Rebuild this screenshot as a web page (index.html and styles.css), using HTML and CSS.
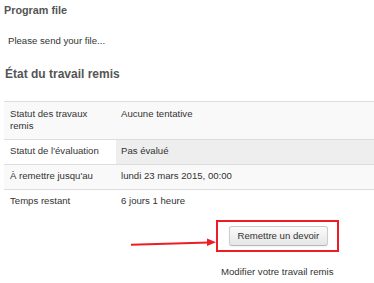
FILE: index.html
```html
<!DOCTYPE html>
<html lang="fr">
  <head>
    <meta charset="UTF-8">
    <meta name="viewport" content="width=device-width, initial-scale=1.0">
    <title>Travail remis</title>
    <link rel="stylesheet" href="styles.css">
  </head>
  <body>
    <h3 class="file-title">Program file</h3>
    <p class="intro">Please send your file...</p>

    <h3 class="status-title">État du travail remis</h3>
    <table class="status-table">
      <tr class="row-shaded">
        <td class="label">Statut des travaux remis</td>
        <td class="value">Aucune tentative</td>
      </tr>
      <tr>
        <td class="label">Statut de l'évaluation</td>
        <td class="value value-grey">Pas évalué</td>
      </tr>
      <tr class="row-shaded">
        <td class="label">À remettre jusqu'au</td>
        <td class="value">lundi 23 mars 2015, 00:00</td>
      </tr>
      <tr>
        <td class="label">Temps restant</td>
        <td class="value">6 jours 1 heure</td>
      </tr>
    </table>

    <div class="submission">
      <svg class="arrow" width="85" height="32" viewBox="0 0 85 32">
        <line x1="0" y1="24.7" x2="78" y2="22.4" stroke="#ee1c24" stroke-width="2"/>
        <polygon points="76,18.6 85,22.2 76,26" fill="#ee1c24"/>
      </svg>
      <div class="submit-col">
        <div class="highlight">
          <button class="btn">Remettre un devoir</button>
        </div>
        <div class="edit-note">Modifier votre travail remis</div>
      </div>
    </div>
  </body>
</html>
```

FILE: styles.css
```css
body {
    font-family: "Liberation Sans", Arial, sans-serif;
    font-size: 9.6px;
    line-height: 12.5px;
    color: #333;
    background: #fff;
    margin: 0;
    padding: 0 0 0 4px;
}
h3 {
    font-weight: bold;
    color: #555;
    margin: 0;
}
.file-title {
    font-size: 10.8px;
    line-height: 13px;
    margin-top: 4px;
}
.intro {
    margin: 17.5px 0 0 4px;
}
.status-title {
    font-size: 12px;
    line-height: 15px;
    margin: 19.5px 0 0 1px;
}
.status-table {
    border-collapse: collapse;
    table-layout: fixed;
    width: 370px;
    margin-top: 19.5px;
}
.status-table td {
    border-top: 1px solid #ddd;
    padding: 5.5px 6px 6px 6px;
    vertical-align: top;
}
.status-table .label {
    width: 98px;
    padding-right: 8px;
}
.status-table .value {
    padding-left: 5px;
}
.row-shaded td {
    background: #f9f9f9;
}
.value-grey {
    background: #eee;
}
.submission {
    display: flex;
    align-items: flex-start;
    padding-left: 127px;
    margin-top: 6px;
}
.arrow {
    display: block;
}
.submit-col {
    display: flex;
    flex-direction: column;
    align-items: center;
}
.highlight {
    border: 2px solid #ee1c24;
    padding: 4.5px 9px 3.5px 11px;
}
.btn {
    display: block;
    font-family: "Liberation Sans", Arial, sans-serif;
    font-size: 9.6px;
    line-height: 12px;
    color: #333;
    padding: 3px 7.5px;
    border: 1px solid #ccc;
    border-bottom-color: #b8b8b8;
    border-radius: 3px;
    background: linear-gradient(#fbfbfb, #e6e6e6);
    box-shadow: inset 0 1px 0 rgba(255,255,255,0.2), 0 1px 2px rgba(0,0,0,0.05);
}
.edit-note {
    margin-top: 14.5px;
}
```
